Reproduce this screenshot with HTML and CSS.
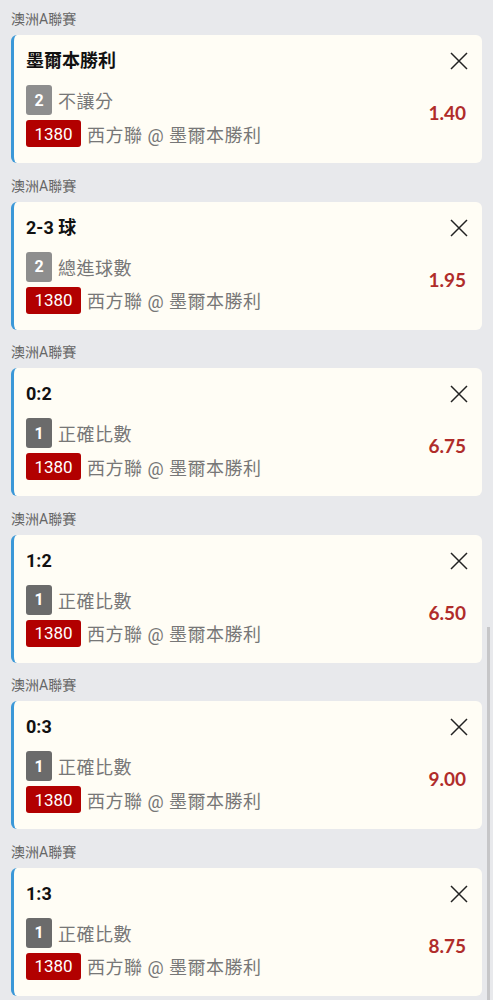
FILE: index.html
```html
<!DOCTYPE html>
<html lang="zh-Hant">
<head>
<meta charset="UTF-8">
<meta name="viewport" content="width=device-width, initial-scale=1.0">
<title>投注單</title>
<link rel="stylesheet" href="styles.css">
</head>
<body>
    <div class="slip">
        <div class="group">
            <div class="league">澳洲A聯賽</div>
            <div class="card">
                <div class="pick">墨爾本勝利</div>
                <button class="close"><svg viewBox="0 0 18 18"><path d="M1 1L17 17M17 1L1 17"/></svg></button>
                <div class="info">
                    <div class="row"><span class="num light">2</span><span class="txt">不讓分</span></div>
                    <div class="row"><span class="code">1380</span><span class="txt">西方聯 @ 墨爾本勝利</span></div>
                </div>
                <div class="odds">1.40</div>
            </div>
        </div>
        <div class="group">
            <div class="league">澳洲A聯賽</div>
            <div class="card">
                <div class="pick">2-3 球</div>
                <button class="close"><svg viewBox="0 0 18 18"><path d="M1 1L17 17M17 1L1 17"/></svg></button>
                <div class="info">
                    <div class="row"><span class="num light">2</span><span class="txt">總進球數</span></div>
                    <div class="row"><span class="code">1380</span><span class="txt">西方聯 @ 墨爾本勝利</span></div>
                </div>
                <div class="odds">1.95</div>
            </div>
        </div>
        <div class="group">
            <div class="league">澳洲A聯賽</div>
            <div class="card">
                <div class="pick">0:2</div>
                <button class="close"><svg viewBox="0 0 18 18"><path d="M1 1L17 17M17 1L1 17"/></svg></button>
                <div class="info">
                    <div class="row"><span class="num">1</span><span class="txt">正確比數</span></div>
                    <div class="row"><span class="code">1380</span><span class="txt">西方聯 @ 墨爾本勝利</span></div>
                </div>
                <div class="odds">6.75</div>
            </div>
        </div>
        <div class="group">
            <div class="league">澳洲A聯賽</div>
            <div class="card">
                <div class="pick">1:2</div>
                <button class="close"><svg viewBox="0 0 18 18"><path d="M1 1L17 17M17 1L1 17"/></svg></button>
                <div class="info">
                    <div class="row"><span class="num">1</span><span class="txt">正確比數</span></div>
                    <div class="row"><span class="code">1380</span><span class="txt">西方聯 @ 墨爾本勝利</span></div>
                </div>
                <div class="odds">6.50</div>
            </div>
        </div>
        <div class="group">
            <div class="league">澳洲A聯賽</div>
            <div class="card">
                <div class="pick">0:3</div>
                <button class="close"><svg viewBox="0 0 18 18"><path d="M1 1L17 17M17 1L1 17"/></svg></button>
                <div class="info">
                    <div class="row"><span class="num">1</span><span class="txt">正確比數</span></div>
                    <div class="row"><span class="code">1380</span><span class="txt">西方聯 @ 墨爾本勝利</span></div>
                </div>
                <div class="odds">9.00</div>
            </div>
        </div>
        <div class="group">
            <div class="league">澳洲A聯賽</div>
            <div class="card">
                <div class="pick">1:3</div>
                <button class="close"><svg viewBox="0 0 18 18"><path d="M1 1L17 17M17 1L1 17"/></svg></button>
                <div class="info">
                    <div class="row"><span class="num">1</span><span class="txt">正確比數</span></div>
                    <div class="row"><span class="code">1380</span><span class="txt">西方聯 @ 墨爾本勝利</span></div>
                </div>
                <div class="odds">8.75</div>
            </div>
        </div>
    </div>
    <div class="scroll-thumb"></div>
</body>
</html>
```

FILE: styles.css
```css
body {
    margin: 0;
    background-color: #e8e9ec;
    font-family: Roboto, "Noto Sans CJK TC", sans-serif;
    overflow: hidden;
}
.slip {
    padding: 0 11px;
}
.group {
    padding-top: 14.6px;
}
.group:first-child {
    padding-top: 11px;
}
.league {
    font-size: 14px;
    line-height: 16px;
    height: 16px;
    color: #666;
    margin-bottom: 8px;
}
.card {
    display: grid;
    grid-template-columns: 1fr auto;
    grid-template-rows: 24px auto;
    row-gap: 12px;
    height: 128px;
    box-sizing: border-box;
    padding: 14px 15px 16px 12px;
    background-color: #fffdf5;
    border-left: 3px solid #3b98d8;
    border-radius: 6px;
}
.pick {
    font-size: 18px;
    line-height: 24px;
    font-weight: bold;
    color: #111;
}
.close {
    width: 18px;
    height: 18px;
    padding: 0;
    margin: 3px -1px 0 0;
    border: none;
    background: none;
    justify-self: end;
}
.close svg {
    display: block;
    width: 18px;
    height: 18px;
    fill: none;
    stroke: #222;
    stroke-width: 1.5;
}
.info {
    display: flex;
    flex-direction: column;
    gap: 5px;
}
.row {
    display: flex;
    align-items: center;
}
.num {
    width: 26px;
    height: 30px;
    border-radius: 3px;
    background-color: #6b6b6b;
    color: #fff;
    font-size: 16px;
    font-weight: bold;
    display: flex;
    justify-content: center;
    align-items: center;
}
.num.light {
    background-color: #8e8e8e;
}
.code {
    width: 55px;
    height: 27px;
    border-radius: 3px;
    background-color: #b20000;
    color: #fff;
    font-size: 17px;
    display: flex;
    justify-content: center;
    align-items: center;
}
.txt {
    margin-left: 6px;
    font-size: 18px;
    letter-spacing: 0.5px;
    color: #777;
}
.odds {
    align-self: center;
    margin: 0 1px 7px 0;
    font-family: Lato, sans-serif;
    font-weight: bold;
    font-size: 19px;
    color: #b02c2a;
}
.scroll-thumb {
    position: fixed;
    right: 3px;
    top: 627px;
    width: 3px;
    height: 380px;
    background-color: #c6c6c8;
}
```
